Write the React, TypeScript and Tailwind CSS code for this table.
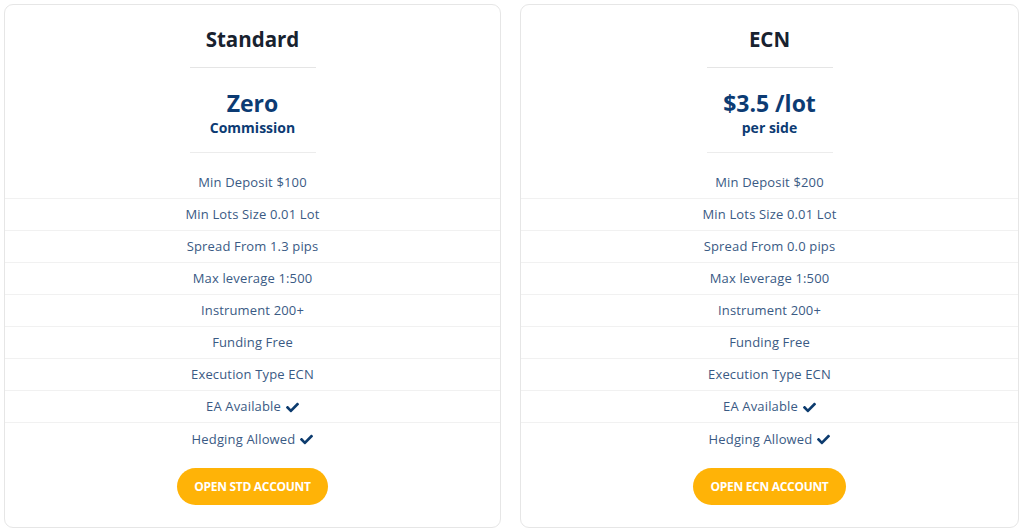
import React from "react";
import { FaCheck } from "react-icons/fa";

type Plan = {
  title: string;
  price: string;
  sub: string;
  features: { text: string; check?: boolean }[];
  button: string;
  width: string;
};

const plans: Plan[] = [
  {
    title: "Standard",
    price: "Zero",
    sub: "Commission",
    features: [
      { text: "Min Deposit $100" },
      { text: "Min Lots Size 0.01 Lot" },
      { text: "Spread From 1.3 pips" },
      { text: "Max leverage 1:500" },
      { text: "Instrument 200+" },
      { text: "Funding Free" },
      { text: "Execution Type ECN" },
      { text: "EA Available", check: true },
      { text: "Hedging Allowed", check: true },
    ],
    button: "OPEN STD ACCOUNT",
    width: "w-[497px]",
  },
  {
    title: "ECN",
    price: "$3.5 /lot",
    sub: "per side",
    features: [
      { text: "Min Deposit $200" },
      { text: "Min Lots Size 0.01 Lot" },
      { text: "Spread From 0.0 pips" },
      { text: "Max leverage 1:500" },
      { text: "Instrument 200+" },
      { text: "Funding Free" },
      { text: "Execution Type ECN" },
      { text: "EA Available", check: true },
      { text: "Hedging Allowed", check: true },
    ],
    button: "OPEN ECN ACCOUNT",
    width: "w-[499px]",
  },
];

function Card({ plan }: { plan: Plan }) {
  return (
    <div
      className={
        plan.width +
        " h-[524px] border border-[#e6e6e6] rounded-[9px] bg-white flex flex-col items-center pt-[19px]"
      }
    >
      <div className="h-[30px] leading-[30px] text-[20.5px] font-bold text-[#18222f] font-['Open_Sans',sans-serif]">
        {plan.title}
      </div>
      <div className="mt-[13px] w-[126px] h-px bg-[#e5e5e5]" />
      <div className="mt-[20px] h-[30px] leading-[30px] text-[23px] font-bold text-[#0c3b73] font-['Open_Sans',sans-serif]">
        {plan.price}
      </div>
      <div className="h-[20px] leading-[20px] text-[14px] font-bold text-[#0c3b73] font-['Open_Sans',sans-serif]">
        {plan.sub}
      </div>
      <div className="mt-[14px] w-[126px] h-px bg-[#ececec]" />
      <div className="mt-[14px] w-full flex flex-col">
        {plan.features.map((f, i) => (
          <div
            key={i}
            className={
              "h-[32px] pt-px flex items-center justify-center gap-[5px] text-[13px] tracking-[0.15px] text-[#3a5a84] font-['Open_Sans',sans-serif] " +
              (i < plan.features.length - 1 ? "border-b border-[#f1f1f1]" : "")
            }
          >
            <span>{f.text}</span>
            {f.check && <FaCheck className="w-[13px] h-[13px] text-[#0c3b6e]" />}
          </div>
        ))}
      </div>
      <button className="mt-[13px] h-[37px] px-[17px] rounded-full bg-[#ffb307] text-white text-[12px] font-bold font-['Open_Sans',sans-serif] tracking-[-0.3px]">
        {plan.button}
      </button>
    </div>
  );
}

export default function App() {
  return (
    <div className="w-[1024px] h-[531px] bg-white flex gap-[19px] pl-[4px] pt-[4px]">
      {plans.map((p) => (
        <Card key={p.title} plan={p} />
      ))}
    </div>
  );
}
